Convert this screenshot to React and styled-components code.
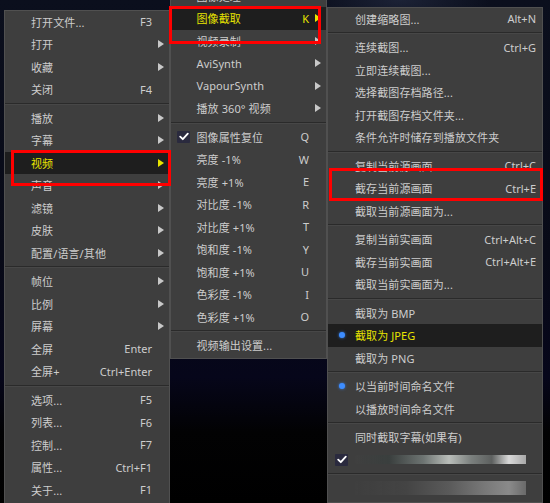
import React from 'react';
import styled, { createGlobalStyle } from 'styled-components';

const Global = createGlobalStyle`
  html, body { margin: 0; padding: 0; background: #000; overflow: hidden; }
  #root { width: 550px; height: 503px; }
`;

const Stage = styled.div`
  position: relative;
  width: 550px;
  height: 503px;
  overflow: hidden;
  display: flex;
  align-items: flex-start;
  padding-left: 4px;
  box-sizing: border-box;
  background:
    radial-gradient(ellipse 90px 30px at 400px 0px, rgba(60, 70, 100, 0.35), transparent),
    linear-gradient(to bottom, #0b0f1d 0%, #080a17 50%, #06061a 75%, #020203 86%, #000 100%);
  font-family: 'Noto Sans', 'Noto Sans CJK SC', sans-serif;
  font-size: 11px;
`;

const Menu = styled.div`
  width: ${(p) => p.$w}px;
  margin-top: ${(p) => p.$top}px;
  box-sizing: border-box;
  background: #3e3e3e;
  border: 1px solid #505050;
  display: flex;
  flex-direction: column;
  padding-bottom: ${(p) => p.$pb || 0}px;
  flex-shrink: 0;
`;

const Row = styled.div`
  height: 22.5px;
  display: flex;
  align-items: center;
  box-sizing: border-box;
  padding-right: ${(p) => (p.$arrows ? 0 : 6)}px;
  background: ${(p) => (p.$active ? '#1e1e1e' : 'transparent')};
  color: ${(p) => (p.$active ? '#e8e400' : '#cdcdcd')};
  white-space: nowrap;
`;

const Lead = styled.div`
  width: ${(p) => p.$w}px;
  flex-shrink: 0;
  display: flex;
  align-items: center;
  justify-content: center;
`;

const Label = styled.span`
  flex: 1;
  letter-spacing: 0.1px;
`;

const Shortcut = styled.span`
  text-align: right;
`;

const ArrowCell = styled.div`
  width: 17px;
  flex-shrink: 0;
  display: flex;
  align-items: center;
  justify-content: center;
`;

const Arrow = styled.div`
  width: 0;
  height: 0;
  border-top: 4px solid transparent;
  border-bottom: 4px solid transparent;
  border-left: 6px solid ${(p) => (p.$active ? '#e8e400' : '#c8c8c8')};
`;

const Sep = styled.div`
  height: 6px;
  display: flex;
  flex-direction: column;
  justify-content: center;
  &::before {
    content: '';
    display: block;
    height: 1px;
    background: #2a2a2a;
  }
  &::after {
    content: '';
    display: block;
    height: 1px;
    background: #474747;
  }
`;

const CheckBox = styled.div`
  width: 13px;
  height: 12px;
  background: #2a2a3e;
  border-radius: 1px;
  display: flex;
  align-items: center;
  justify-content: center;
`;

const Dot = styled.div`
  width: 6px;
  height: 6px;
  border-radius: 50%;
  background: #3d8dff;
  box-shadow: 0 0 3px rgba(60, 140, 255, 0.8);
`;

const Streak = styled.div`
  flex: 1;
  height: ${(p) => p.$h}px;
  margin-right: 10px;
  background: ${(p) => p.$bg};
  filter: blur(0.6px);
`;

const RedBox = styled.div`
  position: absolute;
  box-sizing: border-box;
  border: 3px solid #ff0000;
  pointer-events: none;
`;

const Check = () => (
  <CheckBox>
    <svg width="10" height="9" viewBox="0 0 10 9">
      <path d="M1.2 4.6 L3.8 7.2 L8.8 1.6" fill="none" stroke="#ffffff" strokeWidth="1.8" strokeLinecap="round" strokeLinejoin="round" />
    </svg>
  </CheckBox>
);

const leftItems = [
  { l: '打开文件...', s: 'F3' },
  { l: '打开', sub: 1 },
  { l: '收藏', sub: 1 },
  { l: '关闭', s: 'F4' },
  'sep',
  { l: '播放', sub: 1 },
  { l: '字幕', sub: 1 },
  { l: '视频', sub: 1, a: 1 },
  { l: '声音', sub: 1 },
  { l: '滤镜', sub: 1 },
  { l: '皮肤', sub: 1 },
  { l: '配置/语言/其他', sub: 1 },
  'sep',
  { l: '帧位', sub: 1 },
  { l: '比例', sub: 1 },
  { l: '屏幕', sub: 1 },
  { l: '全屏', s: 'Enter' },
  { l: '全屏+', s: 'Ctrl+Enter' },
  'sep',
  { l: '选项...', s: 'F5' },
  { l: '列表...', s: 'F6' },
  { l: '控制...', s: 'F7' },
  { l: '属性...', s: 'Ctrl+F1' },
  { l: '关于...', s: 'F1' },
];

const midItems = [
  { l: '图像处理', sub: 1 },
  { l: '图像截取', s: 'K', sub: 1, a: 1 },
  { l: '视频录制', sub: 1 },
  { l: 'AviSynth', sub: 1 },
  { l: 'VapourSynth', sub: 1 },
  { l: '播放 360° 视频', sub: 1 },
  'sep',
  { l: '图像属性复位', s: 'Q', check: 1 },
  { l: '亮度 -1%', s: 'W' },
  { l: '亮度 +1%', s: 'E' },
  { l: '对比度 -1%', s: 'R' },
  { l: '对比度 +1%', s: 'T' },
  { l: '饱和度 -1%', s: 'Y' },
  { l: '饱和度 +1%', s: 'U' },
  { l: '色彩度 -1%', s: 'I' },
  { l: '色彩度 +1%', s: 'O' },
  'sep',
  { l: '视频输出设置...' },
];

const rightItems = [
  { l: '创建缩略图...', s: 'Alt+N' },
  'sep',
  { l: '连续截图...', s: 'Ctrl+G' },
  { l: '立即连续截图...' },
  { l: '选择截图存档路径...' },
  { l: '打开截图存档文件夹...' },
  { l: '条件允许时储存到播放文件夹' },
  'sep',
  { l: '复制当前源画面', s: 'Ctrl+C' },
  { l: '截存当前源画面', s: 'Ctrl+E' },
  { l: '截取当前源画面为...' },
  'sep',
  { l: '复制当前实画面', s: 'Ctrl+Alt+C' },
  { l: '截存当前实画面', s: 'Ctrl+Alt+E' },
  { l: '截取当前实画面为...' },
  'sep',
  { l: '截取为 BMP' },
  { l: '截取为 JPEG', dot: 1, a: 1 },
  { l: '截取为 PNG' },
  'sep',
  { l: '以当前时间命名文件', dot: 1 },
  { l: '以播放时间命名文件' },
  'sep',
  { l: '同时截取字幕(如果有)' },
  {
    streak: 1,
    check: 1,
    h: 9,
    bg: 'linear-gradient(to right, rgba(70,70,70,0.2) 0%, #3a3f3e 20%, #6d7472 40%, #b9bdb9 55%, #7b807e 68%, #5d605f 80%, #d8d8d8 90%, #a8a8a8 100%)',
  },
  'sep',
  {
    streak: 1,
    h: 14,
    bg: 'linear-gradient(to right, rgba(70,70,70,0.1) 0%, #444 30%, #5a5a5a 55%, #777 75%, #8a8a8a 90%, #6a6a6a 100%)',
  },
];

const renderItems = (items, leadW, arrows) =>
  items.map((it, i) => {
    if (it === 'sep') return <Sep key={i} />;
    return (
      <Row key={i} $active={it.a} $arrows={arrows}>
        <Lead $w={leadW}>{it.check ? <Check /> : it.dot ? <Dot /> : null}</Lead>
        {it.streak ? (
          <Streak $h={it.h} $bg={it.bg} />
        ) : (
          <>
            <Label>{it.l}</Label>
            {it.s && <Shortcut>{it.s}</Shortcut>}
          </>
        )}
        {arrows && <ArrowCell>{it.sub ? <Arrow $active={it.a} /> : null}</ArrowCell>}
      </Row>
    );
  });

export default function App() {
  return (
    <>
      <Global />
      <Stage>
        <Menu $w={166} $top={9.5} $pb={2}>
          {renderItems(leftItems, 26, true)}
        </Menu>
        <Menu $w={157} $top={-16.5} $pb={1}>
          {renderItems(midItems, 25.5, true)}
        </Menu>
        <Menu $w={216} $top={6.5} $pb={2}>
          {renderItems(rightItems, 27, false)}
        </Menu>
        <RedBox style={{ left: 11, top: 150, width: 160, height: 36 }} />
        <RedBox style={{ left: 169, top: 6, width: 152, height: 38 }} />
        <RedBox style={{ left: 329, top: 168, width: 214, height: 33, borderWidth: 3.5 }} />
      </Stage>
    </>
  );
}
